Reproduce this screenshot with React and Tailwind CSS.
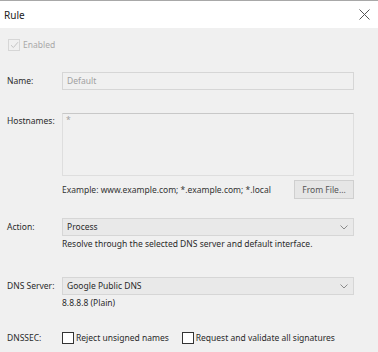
import { useState } from 'react';

function Chevron() {
  return (
    <svg width="8" height="5" viewBox="0 0 8 5" className="shrink-0">
      <path d="M0.5 0.5 L4 4 L7.5 0.5" fill="none" stroke="#8a8a8a" strokeWidth="1" />
    </svg>
  );
}

function Box({ checked, disabled }) {
  return (
    <span
      className={`flex h-[12px] w-[12px] shrink-0 items-center justify-center border ${
        disabled ? 'border-[#d6d6d6] bg-[#f0f0f0]' : 'border-[#333] bg-white'
      }`}
    >
      {checked && (
        <svg width="9" height="8" viewBox="0 0 9 8">
          <path d="M1 4.2 L3.4 6.5 L8 1.2" fill="none" stroke="#c4c4c4" strokeWidth="1" />
        </svg>
      )}
    </span>
  );
}

export default function App() {
  const [reject, setReject] = useState(false);
  const [validate, setValidate] = useState(false);

  return (
    <div
      className="h-[352px] w-[378px] overflow-hidden bg-[#f0f0f0] text-[8.5px] leading-[12px] text-[#2a2a2a]"
      style={{ fontFamily: '"Noto Sans", "Open Sans", sans-serif' }}
    >
      <div className="flex h-[28px] items-center justify-between border-t border-[#a8a8a8] bg-white pl-[4px] pr-[8px]">
        <span className="text-[10px] text-[#222]">Rule</span>
        <svg width="11" height="11" viewBox="0 0 11 11">
          <path d="M0.5 0.5 L10.5 10.5 M10.5 0.5 L0.5 10.5" stroke="#555" strokeWidth="1" />
        </svg>
      </div>

      <div className="pl-[7px] pr-[24px]">
        <div className="mt-[10px] flex h-[14px] items-center gap-[3px] pl-[1px] text-[#a8a8a8]">
          <Box checked disabled />
          <span>Enabled</span>
        </div>

        <div className="mt-[20px] flex items-center">
          <span className="w-[55px] shrink-0">Name:</span>
          <div className="flex h-[18px] flex-1 items-center border border-[#d6d6d6] bg-[#f0f0f0] px-[4px] text-[#a0a0a0]">
            Default
          </div>
        </div>

        <div className="mt-[23px] flex items-start">
          <span className="w-[55px] shrink-0 pt-[2px]">Hostnames:</span>
          <div className="h-[63px] flex-1 border border-[#dedede] border-t-[#c8c8c8] bg-[#f0f0f0] px-[3px] text-[#a0a0a0]">
            *
          </div>
        </div>

        <div className="mt-[4px] flex items-center pl-[55px]">
          <span className="flex-1 text-[#333]">Example: www.example.com; *.example.com; *.local</span>
          <div className="flex h-[19px] w-[60px] items-center justify-center border border-[#cfcfcf] bg-[#e6e6e6] text-[#555]">
            From File...
          </div>
        </div>

        <div className="mt-[19px] flex items-center">
          <span className="w-[55px] shrink-0">Action:</span>
          <div className="flex h-[18px] flex-1 items-center justify-between border border-[#d6d6d6] bg-[#e9e9e9] pl-[4px] pr-[5px]">
            <span>Process</span>
            <Chevron />
          </div>
        </div>
        <div className="mt-[2px] pl-[55px]">Resolve through the selected DNS server and default interface.</div>

        <div className="mt-[27px] flex items-center">
          <span className="w-[55px] shrink-0">DNS Server:</span>
          <div className="flex h-[18px] flex-1 items-center justify-between border border-[#d6d6d6] bg-[#e9e9e9] pl-[4px] pr-[5px]">
            <span>Google Public DNS</span>
            <Chevron />
          </div>
        </div>
        <div className="mt-[2px] pl-[55px]">8.8.8.8 (Plain)</div>

        <div className="mt-[23px] flex items-center">
          <span className="w-[55px] shrink-0">DNSSEC:</span>
          <label className="flex cursor-default items-center gap-[2px]" onClick={() => setReject(!reject)}>
            <Box checked={reject} />
            <span>Reject unsigned names</span>
          </label>
          <label className="ml-[13px] flex cursor-default items-center gap-[2px]" onClick={() => setValidate(!validate)}>
            <Box checked={validate} />
            <span>Request and validate all signatures</span>
          </label>
        </div>
      </div>
    </div>
  );
}
